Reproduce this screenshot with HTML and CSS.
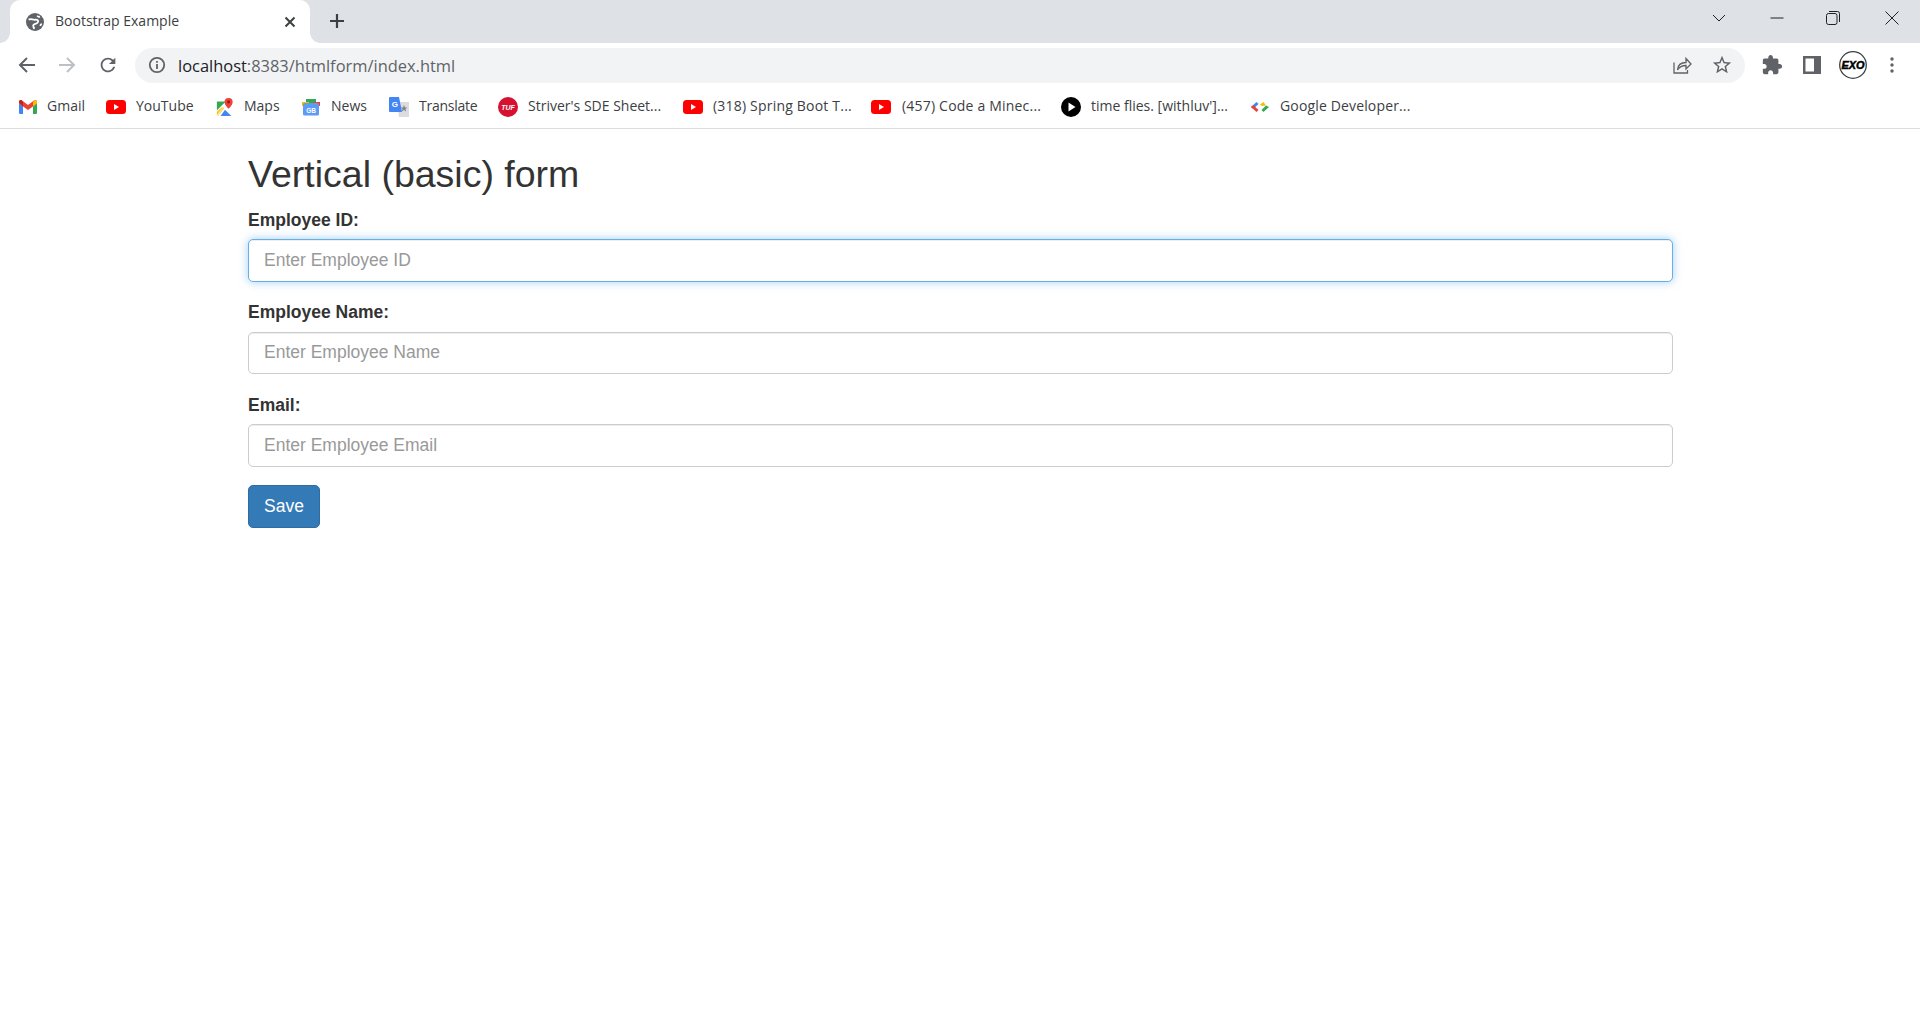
FILE: index.html
```html
<!DOCTYPE html>
<html lang="en">
<head>
    <meta charset="UTF-8">
    <meta name="viewport" content="width=device-width, initial-scale=1.0">
    <title>Bootstrap Example</title>
    <link rel="stylesheet" href="styles.css">
</head>
<body>
    <!-- Browser chrome -->
    <header class="chrome">
        <div class="tab-strip">
            <div class="tab">
                <svg class="tab-globe" viewBox="0 0 20 20"><circle cx="10" cy="10" r="10" fill="#5f6368"/><path class="globe-land" d="M3 7.500C5 5.500 7.500 8 10 7.500 12.500 7 14.500 8.500 13 10.500 11.500 12.500 8 11.500 8 14 8 15.500 8.500 16.500 9.500 17.500"/><path class="globe-land" d="M12.500 3c.5 1 2 1.500 3 1M17.500 12c-1 .5-1.500 1-1.500 2.500"/></svg>
                <span class="tab-title">Bootstrap Example</span>
                <svg class="tab-close" viewBox="0 0 12 12"><path d="M1.500 1.500l9 9M10.500 1.500l-9 9"/></svg>
            </div>
            <svg class="new-tab" viewBox="0 0 16 16"><path d="M8 1v14M1 8h14"/></svg>
            <div class="win-controls">
                <div class="win-btn win-list"><svg viewBox="0 0 14 8"><path d="M1 1l6 6 6-6"/></svg></div>
                <div class="win-btn win-min"><svg viewBox="0 0 14 14"><path d="M.5 7h13"/></svg></div>
                <div class="win-btn win-max"><svg viewBox="0 0 14 14"><rect x=".5" y="2.500" width="10.500" height="11" rx="2"/><path d="M3 .5h8.500a2 2 0 0 1 2 2V11"/></svg></div>
                <div class="win-btn"><svg viewBox="0 0 14 14"><path d="M.5.5l13 13M13.500.5l-13 13"/></svg></div>
            </div>
        </div>

        <div class="toolbar">
            <div class="tool-btn"><svg class="line-icon" viewBox="0 0 24 24"><path d="M20 12H5M12 5l-7 7 7 7"/></svg></div>
            <div class="tool-btn tool-btn-off"><svg class="line-icon" viewBox="0 0 24 24"><path d="M4 12h15M12 5l7 7-7 7"/></svg></div>
            <div class="tool-btn"><svg class="fill-icon reload" viewBox="0 0 24 24"><path d="M17.650 6.350A7.958 7.958 0 0 0 12 4c-4.420 0-7.990 3.580-7.990 8s3.570 8 7.990 8c3.730 0 6.840-2.550 7.730-6h-2.080A5.990 5.990 0 0 1 12 18c-3.310 0-6-2.690-6-6s2.690-6 6-6c1.660 0 3.140.69 4.220 1.780L13 11h7V4l-2.350 2.350z"/></svg></div>
            <div class="omnibox">
                <svg class="omni-info" viewBox="0 0 18 18"><circle cx="9" cy="9" r="7.200"/><path d="M9 8v5M9 5v1.800"/></svg>
                <div class="omni-url"><span class="omni-host">localhost</span>:8383/htmlform/index.html</div>
                <svg class="omni-share" viewBox="0 0 20 20"><path d="M2 7.500V18h13.500v-3"/><path d="M5.500 15c.3-5 3.600-7.500 8.500-7.500V3.500l5 5.500-5 5v-3.500c-3.800 0-6.700 1.500-8.500 4.500z"/></svg>
                <svg class="omni-star" viewBox="0 0 24 24"><path d="M22 9.240l-7.190-.62L12 2 9.190 8.630 2 9.240l5.460 4.730L5.820 21 12 17.270 18.180 21l-1.630-7.030L22 9.240zM12 15.400l-3.760 2.270 1-4.280-3.320-2.880 4.380-.38L12 6.100l1.710 4.040 4.380.38-3.320 2.880 1 4.280L12 15.400z"/></svg>
            </div>
            <div class="tool-right">
                <div class="tool-btn"><svg class="fill-icon" viewBox="0 0 24 24"><path d="M20.500 11H19V7c0-1.100-.9-2-2-2h-4V3.500C13 2.120 11.880 1 10.500 1S8 2.120 8 3.500V5H4c-1.100 0-1.990.9-1.990 2v3.800H3.500c1.490 0 2.700 1.210 2.700 2.700s-1.210 2.700-2.700 2.700H2V20c0 1.100.9 2 2 2h3.800v-1.500c0-1.490 1.210-2.700 2.700-2.700 1.490 0 2.700 1.210 2.700 2.700V22H17c1.100 0 2-.9 2-2v-4h1.500c1.380 0 2.500-1.120 2.500-2.500S21.880 11 20.500 11z"/></svg></div>
                <div class="tool-btn"><svg class="panel-icon" viewBox="0 0 18 18"><path fill-rule="evenodd" d="M0 0h18v18H0zM2.500 2.500v13h8.500v-13z"/></svg></div>
                <div class="tool-btn">
                    <svg class="avatar" viewBox="0 0 28 28">
                        <circle cx="14" cy="14" r="13.300" fill="#fff" stroke="#3c4043" stroke-width="1.300"/>
                        <text x="14" y="17.500" text-anchor="middle" textLength="23" lengthAdjust="spacingAndGlyphs" class="avatar-text">EXO</text>
                    </svg>
                </div>
                <div class="tool-btn"><svg class="dots" viewBox="0 0 4 16"><circle cx="2" cy="2" r="1.700"/><circle cx="2" cy="8" r="1.700"/><circle cx="2" cy="14" r="1.700"/></svg></div>
            </div>
        </div>

        <nav class="bookmarks">
            <a class="bookmark bm-gmail">
                <svg viewBox="0 0 18 14"><path fill="#4285f4" d="M0 3v9.700C0 13.400.6 14 1.300 14H4V6.500z"/><path fill="#34a853" d="M14 6.500V14h2.700c.7 0 1.300-.6 1.300-1.300V3z"/><path fill="#ea4335" d="M0 1.700C0 .3 1.600-.5 2.700.3L9 5l6.300-4.700C16.400-.5 18 .3 18 1.700V3l-4 3.500L9 10 4 6.500 0 3z"/><path fill="#fbbc04" d="M14 2.200l1.300-1.900C16.400-.5 18 .3 18 1.700V3l-4 3.500z"/><path fill="#c5221f" d="M0 1.700C0 .3 1.600-.5 2.700.3L4 2.200v4.300L0 3z"/></svg>
                <span>Gmail</span>
            </a>
            <a class="bookmark bm-youtube">
                <svg viewBox="0 0 20 14"><rect width="20" height="14" rx="3.500" fill="#f00"/><path d="M8 4l5 3-5 3z" fill="#fff"/></svg>
                <span>YouTube</span>
            </a>
            <a class="bookmark bm-maps">
                <svg viewBox="0 0 18 20"><path fill="#34a853" d="M0 4h10L0 14z"/><path fill="#fbbc04" d="M0 15.500L6 9.500l2 2L1.500 20H0z"/><path fill="#4285f4" d="M4 20l5-7 7 7z"/><path fill="#fff" d="M0 14l10-10h1.500L1.500 20H0v-1.500L6.500 10z" opacity=".65"/><path fill="#ea4335" d="M13 0a4.500 4.500 0 0 0-4.500 4.500C8.500 8 13 12 13 12s4.500-4 4.500-7.500A4.500 4.500 0 0 0 13 0z"/><circle cx="13" cy="4.500" r="1.600" fill="#a50e0e"/></svg>
                <span>Maps</span>
            </a>
            <a class="bookmark bm-news">
                <svg viewBox="0 0 18 18"><path fill="#34a853" d="M4 1h10v4H4z"/><path fill="#fbbc04" d="M0 4h7v4H0z"/><path fill="#ea4335" d="M11 4h7v4h-7z"/><rect x="1" y="5" width="16" height="12.500" rx="1.500" fill="#5c9cf5"/><text x="9" y="14.500" text-anchor="middle" class="news-text">GB</text></svg>
                <span>News</span>
            </a>
            <a class="bookmark bm-translate">
                <svg viewBox="0 0 20 20"><path fill="#dadce0" d="M8 5h12v15H10z"/><path fill="#4285f4" d="M1 0h9l3 15H1a1 1 0 0 1-1-1V1a1 1 0 0 1 1-1z"/><text x="5.800" y="10" text-anchor="middle" class="translate-text">G</text><path fill="#80868b" d="M15 8l1 2.500h2.500l-2 1.500.7 2.500-2.200-1.500-2.200 1.500.7-2.500-2-1.500H14z"/></svg>
                <span>Translate</span>
            </a>
            <a class="bookmark bm-tuf">
                <svg viewBox="0 0 20 20"><circle cx="10" cy="10" r="10" fill="#d5122f"/><text x="10" y="12.500" text-anchor="middle" class="tuf-text">TUF</text></svg>
                <span>Striver's SDE Sheet...</span>
            </a>
            <a class="bookmark bm-spring">
                <svg viewBox="0 0 20 14"><rect width="20" height="14" rx="3.500" fill="#f00"/><path d="M8 4l5 3-5 3z" fill="#fff"/></svg>
                <span>(318) Spring Boot T...</span>
            </a>
            <a class="bookmark bm-minec">
                <svg viewBox="0 0 20 14"><rect width="20" height="14" rx="3.500" fill="#f00"/><path d="M8 4l5 3-5 3z" fill="#fff"/></svg>
                <span>(457) Code a Minec...</span>
            </a>
            <a class="bookmark bm-time">
                <svg viewBox="0 0 20 20"><circle cx="10" cy="10" r="10" fill="#000"/><path d="M7.500 5.500l7 4.500-7 4.500z" fill="#fff"/></svg>
                <span>time flies. [withluv']...</span>
            </a>
            <a class="bookmark bm-devs">
                <svg viewBox="0 0 18 10"><path fill="#4285f4" d="M5.500 0L0 5l2.200 2L7.500 2z"/><path fill="#ea4335" d="M0 5l5.500 5 2-2-3.200-3-2.100-2z"/><path fill="#fbbc04" d="M12.500 0L9 2.500l2 1.500 4-.5z"/><path fill="#34a853" d="M12.500 10L18 5l-3-1.500L10.500 8z"/></svg>
                <span>Google Developer...</span>
            </a>
        </nav>
    </header>

    <!-- Page content -->
    <main class="container">
        <h2>Vertical (basic) form</h2>
        <form>
            <div class="form-group">
                <label for="empId">Employee ID:</label>
                <input type="text" class="form-control is-focused" id="empId" placeholder="Enter Employee ID">
            </div>
            <div class="form-group">
                <label for="empName">Employee Name:</label>
                <input type="text" class="form-control" id="empName" placeholder="Enter Employee Name">
            </div>
            <div class="form-group">
                <label for="empEmail">Email:</label>
                <input type="text" class="form-control" id="empEmail" placeholder="Enter Employee Email">
            </div>
            <button type="button" class="btn-save">Save</button>
        </form>
    </main>
</body>
</html>
```

FILE: styles.css
```css
/* Reset */
* {
    margin: 0;
    padding: 0;
    box-sizing: border-box;
}

body {
    font-family: 'Liberation Sans', Arial, sans-serif;
    font-size: 17.5px;
    line-height: 25px;
    color: #333;
    background-color: #fff;
}

svg {
    display: block;
    flex: none;
}

/* Tab strip */
.chrome {
    font-family: 'Open Sans', sans-serif;
    border-bottom: 1px solid #dadce0;
}

.tab-strip {
    display: flex;
    align-items: flex-start;
    height: 43px;
    background-color: #dee1e6;
}

.tab {
    position: relative;
    display: flex;
    align-items: center;
    width: 300px;
    height: 43px;
    margin-left: 10px;
    padding: 0 14px 0 16px;
    background-color: #fff;
    border-radius: 10px 10px 0 0;
}

.tab::before,
.tab::after {
    content: "";
    position: absolute;
    bottom: 0;
    width: 10px;
    height: 10px;
}

.tab::before {
    left: -10px;
    background: radial-gradient(circle at 0 0, #dee1e6 9.5px, #fff 10px);
}

.tab::after {
    right: -10px;
    background: radial-gradient(circle at 100% 0, #dee1e6 9.5px, #fff 10px);
}

.tab-globe {
    width: 18px;
    height: 18px;
}

.globe-land {
    fill: none;
    stroke: #fff;
    stroke-width: 2;
}

.tab-title {
    flex: 1;
    margin: -2px 0 0 11px;
    font-size: 14px;
    color: #3c4043;
}

.tab-close {
    width: 12px;
    height: 12px;
    fill: none;
    stroke: #3c4043;
    stroke-width: 2;
}

.new-tab {
    width: 16px;
    height: 16px;
    margin: 13px 0 0 19px;
    fill: none;
    stroke: #3c4043;
    stroke-width: 2.2;
}

.win-controls {
    display: flex;
    margin-left: auto;
}

.win-btn {
    display: flex;
    align-items: center;
    justify-content: center;
    width: 57px;
    height: 36px;
}

.win-list {
    width: 40px;
    margin-right: 12px;
}

.win-min {
    width: 52px;
}

.win-max {
    width: 60px;
}

.win-btn svg {
    width: 14px;
    height: 14px;
    fill: none;
    stroke: #202124;
    stroke-width: 1;
}

/* Toolbar */
.toolbar {
    display: flex;
    align-items: center;
    height: 44px;
    padding: 0 8px 0 7px;
    background-color: #fff;
}

.tool-btn {
    display: flex;
    align-items: center;
    justify-content: center;
    width: 40px;
    height: 35px;
}

.line-icon {
    width: 24px;
    height: 24px;
    fill: none;
    stroke: #5f6368;
    stroke-width: 2;
}

.tool-btn-off .line-icon {
    stroke: #bdc1c6;
}

.fill-icon {
    width: 22px;
    height: 22px;
    fill: #5f6368;
}

.reload {
    margin-left: 2px;
}

.panel-icon {
    width: 18px;
    height: 18px;
    fill: #5f6368;
}

.avatar {
    width: 28px;
    height: 28px;
    margin-left: 2px;
}

.avatar-text {
    font-family: 'Liberation Sans', sans-serif;
    font-size: 11px;
    font-weight: bold;
    font-style: italic;
    fill: #000;
    stroke: #000;
    stroke-width: 0.5;
}

.dots {
    width: 4px;
    height: 16px;
    fill: #5f6368;
}

.omnibox {
    flex: 1;
    display: flex;
    align-items: center;
    height: 35px;
    margin-left: 8px;
    padding: 0 12px 0 13px;
    background-color: #f1f3f4;
    border-radius: 18px;
}

.omni-info {
    width: 18px;
    height: 18px;
    fill: none;
    stroke: #5f6368;
    stroke-width: 1.8;
}

.omni-url {
    flex: 1;
    margin-left: 12px;
    font-size: 16.45px;
    color: #5f6368;
}

.omni-host {
    color: #202124;
}

.omni-share {
    width: 20px;
    height: 20px;
    margin-right: 19px;
    fill: none;
    stroke: #5f6368;
    stroke-width: 1.3;
}

.omni-star {
    width: 22px;
    height: 22px;
    fill: #5f6368;
}

.tool-right {
    display: flex;
    margin-left: 7px;
}

/* Bookmarks bar */
.bookmarks {
    display: flex;
    align-items: center;
    height: 41px;
    padding-left: 19px;
    padding-bottom: 1px;
    background-color: #fff;
}

.bookmark {
    display: flex;
    align-items: center;
    font-size: 14px;
    color: #3c4043;
    white-space: nowrap;
}

.bookmark span {
    margin-top: -4px;
}

.bookmark svg {
    width: 20px;
    height: 20px;
    margin-right: 10px;
}

.bm-gmail { width: 87px; }
.bm-youtube { width: 110px; }
.bm-maps { width: 86px; }
.bm-news { width: 87px; }
.bm-translate { width: 109px; }
.bm-tuf { width: 185px; }
.bm-spring { width: 188px; }
.bm-minec { width: 190px; }
.bm-time { width: 190px; }

.bm-gmail svg,
.bm-maps svg,
.bm-news svg,
.bm-devs svg {
    width: 18px;
    height: 18px;
}

.bm-news svg,
.bm-minec svg,
.bm-devs svg {
    margin-right: 11px;
}

.bm-translate span { letter-spacing: -0.25px; }
.bm-spring span { letter-spacing: 0.2px; }
.bm-minec span { letter-spacing: 0.2px; }
.bm-devs span { letter-spacing: 0.15px; }

.news-text {
    font-family: 'Liberation Sans', sans-serif;
    font-size: 6.5px;
    font-weight: bold;
    fill: #fff;
}

.translate-text {
    font-family: 'Liberation Sans', sans-serif;
    font-size: 8px;
    font-weight: bold;
    fill: #fff;
}

.tuf-text {
    font-family: 'Liberation Sans', sans-serif;
    font-size: 7px;
    font-weight: bold;
    font-style: italic;
    fill: #fff;
}

/* Page content */
.container {
    width: 1425px;
    margin-left: 248px;
}

h2 {
    margin: 25px 0 12.5px;
    font-size: 37.5px;
    font-weight: 500;
    line-height: 41.25px;
}

.form-group {
    margin-bottom: 18.75px;
}

label {
    display: block;
    margin-bottom: 6.25px;
    font-weight: bold;
}

.form-control {
    display: block;
    width: 100%;
    height: 42.5px;
    padding: 7.5px 15px;
    font-family: inherit;
    font-size: 17.5px;
    color: #555;
    background-color: #fff;
    border: 1px solid #ccc;
    border-radius: 5px;
    box-shadow: inset 0 1px 1px rgba(0, 0, 0, 0.075);
    outline: none;
}

.form-control::placeholder {
    color: #999;
}

.is-focused {
    border-color: #66afe9;
    box-shadow: inset 0 1px 1px rgba(0, 0, 0, 0.075), 0 0 10px rgba(102, 175, 233, 0.6);
}

.btn-save {
    height: 42.5px;
    padding: 7.5px 15px;
    font-family: inherit;
    font-size: 17.5px;
    color: #fff;
    background-color: #337ab7;
    border: 1px solid #2e6da4;
    border-radius: 5px;
    cursor: pointer;
}
```
